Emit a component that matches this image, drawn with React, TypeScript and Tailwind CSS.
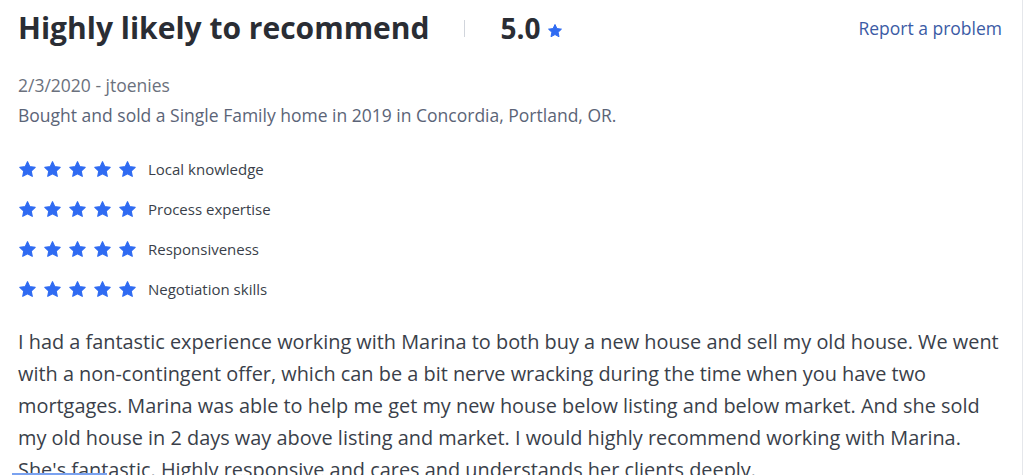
const ratings = [
  "Local knowledge",
  "Process expertise",
  "Responsiveness",
  "Negotiation skills",
];

const reviewLines = [
  "I had a fantastic experience working with Marina to both buy a new house and sell my old house. We went",
  "with a non-contingent offer, which can be a bit nerve wracking during the time when you have two",
  "mortgages. Marina was able to help me get my new house below listing and below market. And she sold",
  "my old house in 2 days way above listing and market. I would highly recommend working with Marina.",
  "She's fantastic. Highly responsive and cares and understands her clients deeply.",
];

function Star({ className }: { className: string }) {
  return (
    <svg viewBox="0 0 24 24" className={className} aria-hidden="true">
      <path
        fill="currentColor"
        stroke="currentColor"
        strokeWidth="1.5"
        strokeLinejoin="round"
        d="M12 2.2l2.9 6.2 6.8.8-5 4.7 1.3 6.7L12 17.3l-6 3.3 1.3-6.7-5-4.7 6.8-.8z"
      />
    </svg>
  );
}

export default function App() {
  return (
    <div
      className="relative h-[475px] w-[1024px] overflow-hidden bg-white"
      style={{ fontFamily: '"Open Sans", sans-serif' }}
    >
      <div className="absolute right-[1px] top-0 h-full w-px bg-gray-200" />

      <div className="pl-[18px] pr-[22px]">
        <div className="flex items-center pt-[7px]">
          <h1 className="text-[30px] font-bold leading-[42px] text-[#2a2d34]">
            Highly likely to recommend
          </h1>
          <div className="ml-[34px] h-[17px] w-px bg-gray-300" />
          <span className="ml-[36px] text-[28px] font-bold leading-[42px] text-[#2a2d34]">
            5.0
          </span>
          <Star className="ml-[6px] mt-[6px] h-[16px] w-[16px] text-[#2f6bf2]" />
          <a className="ml-auto text-[17.5px] text-[#3b5ba5]">Report a problem</a>
        </div>

        <div className="mt-[21px] text-[17.5px] leading-[30px] text-[#6b717d]">
          2/3/2020 - jtoenies
        </div>
        <div className="text-[17.5px] leading-[30px] text-[#5b6477]">
          Bought and sold a Single Family home in 2019 in Concordia, Portland, OR.
        </div>

        <div className="mt-[29px] flex flex-col gap-[20px]">
          {ratings.map((r) => (
            <div key={r} className="flex h-[20px] items-center">
              <div className="flex gap-[6px]">
                {[0, 1, 2, 3, 4].map((i) => (
                  <Star key={i} className="h-[19px] w-[19px] text-[#2f6bf2]" />
                ))}
              </div>
              <span className="ml-[11px] text-[15px] text-[#3a3f4a]">{r}</span>
            </div>
          ))}
        </div>

        <p className="mt-[27px] text-[19.9px] leading-[32px] text-[#3a3f4a]">
          {reviewLines.map((l) => (
            <span key={l} className="block whitespace-nowrap">
              {l}
            </span>
          ))}
        </p>
      </div>

      <div className="absolute bottom-0 left-[12px] h-[2px] w-[95px] bg-[#7aa2f0]" />
    </div>
  );
}
